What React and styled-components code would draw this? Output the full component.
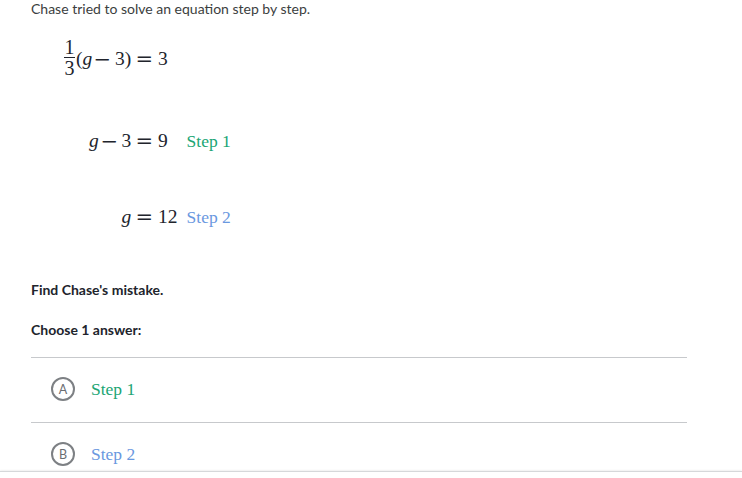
import styled, { createGlobalStyle } from 'styled-components';

const GlobalStyle = createGlobalStyle`
	html, body {
		margin: 0;
		padding: 0;
		background: #fff;
	}
	body {
		font-family: Lato, 'Open Sans', sans-serif;
		color: #21242c;
	}
`;

const Page = styled.div`
	padding: 0 55px 0 31px;
`;

const Prompt = styled.p`
	margin: 0;
	font-size: 14px;
	line-height: 18px;
	color: #3b3e40;
`;

const MathGrid = styled.div`
	display: grid;
	grid-template-columns: auto auto auto;
	align-items: center;
	margin: 19px 0 0 33px;
	width: max-content;
	font-family: 'Liberation Serif', 'DejaVu Serif', serif;
	font-size: 19.5px;
	line-height: 24px;
	color: #21242c;
`;

const Lhs = styled.div`
	justify-self: end;
	display: flex;
	align-items: center;
	height: ${(p) => p.$h}px;
	margin-top: ${(p) => p.$top || 0}px;
	white-space: nowrap;
`;

const Rhs = styled.div`
	display: flex;
	align-items: center;
	height: ${(p) => p.$h}px;
	margin-top: ${(p) => p.$top || 0}px;
	white-space: nowrap;
`;

const Label = styled.div`
	display: flex;
	align-items: center;
	padding-left: 9px;
	height: ${(p) => p.$h}px;
	margin-top: ${(p) => p.$top || 0}px;
	font-size: 17.5px;
	color: ${(p) => p.$color};
`;

const Frac = styled.span`
	display: inline-flex;
	flex-direction: column;
	align-items: center;
	margin-right: 1px;
	font-size: 20px;
	line-height: 17px;
	position: relative;
	top: -1px;
`;

const FracBar = styled.span`
	display: block;
	width: 11px;
	border-top: 1px solid #21242c;
	margin: 1px 0 2px;
`;

const Var = styled.i`
	font-style: italic;
`;

const Op = styled.span`
	display: inline-block;
	font-family: 'DejaVu Serif', serif;
	font-size: 20px;
	transform: scaleX(1.05);
	margin: ${(p) => (p.$rel ? '0 5px 0 5px' : '0 4px 0 2px')};
`;

const Bold = styled.p`
	margin: ${(p) => p.$top}px 0 0;
	font-size: 14px;
	line-height: 18px;
	font-weight: 700;
	color: #21242c;
`;

const Choices = styled.div`
	margin-top: 18px;
	border-top: 1px solid #c7c9cc;
`;

const Choice = styled.div`
	box-sizing: border-box;
	display: flex;
	align-items: center;
	gap: 16px;
	height: 65px;
	padding: 0 0 2px 20px;
	border-bottom: 1px solid #c7c9cc;
`;

const Circle = styled.span`
	box-sizing: border-box;
	width: 24px;
	height: 24px;
	border-radius: 50%;
	border: 2px solid #7d8084;
	display: flex;
	align-items: center;
	justify-content: center;
	font-family: Lato, sans-serif;
	font-size: 12.5px;
	color: #6b6e72;
`;

const ChoiceText = styled.span`
	font-family: 'Liberation Serif', 'DejaVu Serif', serif;
	font-size: 17.5px;
	color: ${(p) => p.$color};
`;

const Footer = styled.div`
	position: fixed;
	left: 0;
	right: 0;
	bottom: 0;
	height: 6px;
	background: #fff;
	border-top: 1px solid #d6d8da;
	box-shadow: 0 -1px 2px rgba(0, 0, 0, 0.06);
`;

const GREEN = '#20a574';
const BLUE = '#6a98e0';

export default function App() {
	return (
		<>
			<GlobalStyle />
			<Page>
				<Prompt>Chase tried to solve an equation step by step.</Prompt>
				<MathGrid>
					<Lhs $h={44}>
						<Frac>
							<span>1</span>
							<FracBar />
							<span>3</span>
						</Frac>
						<span>(</span>
						<Var>g</Var>
						<Op>−</Op>
						<span>3)</span>
					</Lhs>
					<Rhs $h={44}>
						<Op $rel>=</Op>
						<span>3</span>
					</Rhs>
					<Label $h={44} />

					<Lhs $h={42} $top={39}>
						<Var>g</Var>
						<Op>−</Op>
						<span>3</span>
					</Lhs>
					<Rhs $h={42} $top={39}>
						<Op $rel>=</Op>
						<span>9</span>
					</Rhs>
					<Label $h={42} $top={39} $color={GREEN}>
						Step 1
					</Label>

					<Lhs $h={42} $top={34}>
						<Var>g</Var>
					</Lhs>
					<Rhs $h={42} $top={34}>
						<Op $rel>=</Op>
						<span>12</span>
					</Rhs>
					<Label $h={42} $top={34} $color={BLUE}>
						Step 2
					</Label>
				</MathGrid>
				<Bold $top={43}>Find Chase's mistake.</Bold>
				<Bold $top={22}>Choose 1 answer:</Bold>
				<Choices>
					<Choice>
						<Circle>A</Circle>
						<ChoiceText $color={GREEN}>Step 1</ChoiceText>
					</Choice>
					<Choice>
						<Circle>B</Circle>
						<ChoiceText $color={BLUE}>Step 2</ChoiceText>
					</Choice>
				</Choices>
			</Page>
			<Footer />
		</>
	);
}
